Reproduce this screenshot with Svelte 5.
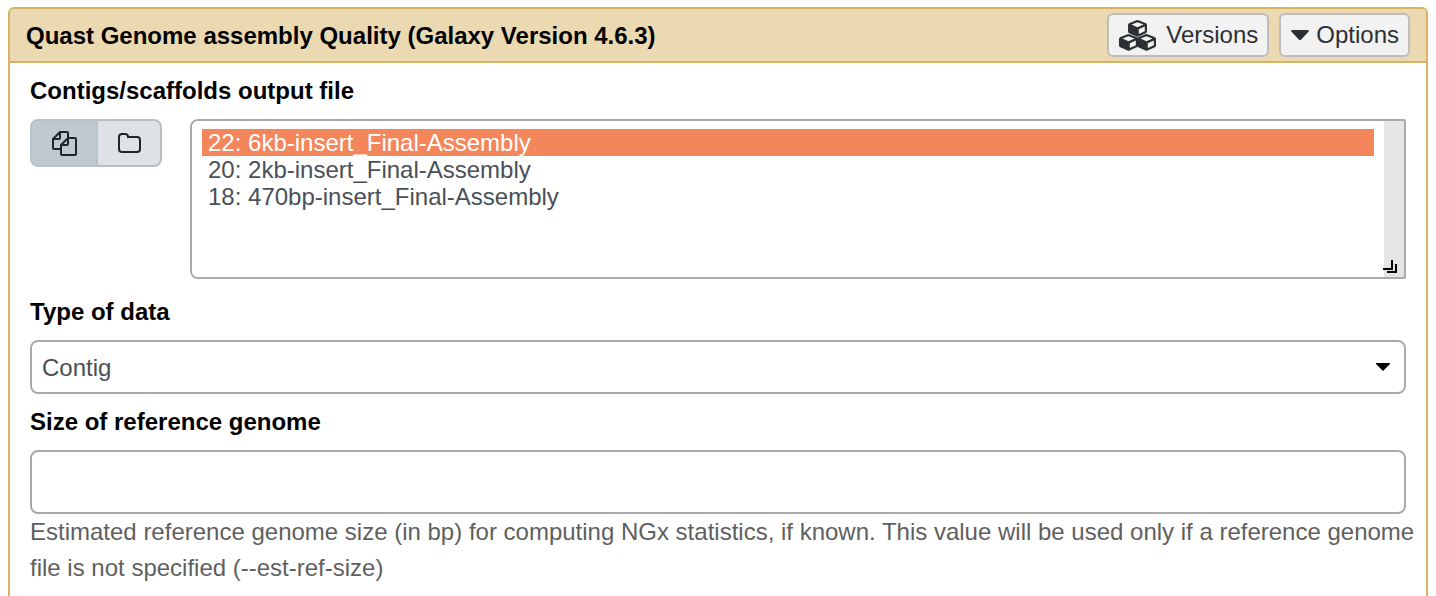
<script>
  const datasets = [
    { id: 22, name: '6kb-insert_Final-Assembly' },
    { id: 20, name: '2kb-insert_Final-Assembly' },
    { id: 18, name: '470bp-insert_Final-Assembly' }
  ];
  const cubes = [
    [9, 0],
    [0, 14],
    [18, 14]
  ];
  let selected = $state([22]);
  let dataType = $state('contig');
  let genomeSize = $state('');
  let source = $state('multiple');
</script>

<main class="tool">
  <header class="tool-header">
    <h1>Quast Genome assembly Quality (Galaxy Version 4.6.3)</h1>
    <div class="actions">
      <button type="button" class="action">
        <svg class="cubes" viewBox="0 0 37 31" aria-hidden="true">
          {#each cubes as [x, y]}
            <path transform="translate({x} {y})" fill-rule="evenodd" d="M8.500 .3Q9.500 -.1 10.500 .3L17.500 3Q19 3.600 19 5V11.500Q19 12.700 17.800 13.300L10.500 16.600Q9.500 17 8.500 16.600L1.200 13.300Q0 12.700 0 11.500V5Q0 3.600 1.500 3ZM9.500 2.200L3.500 4.600L9.500 7.200L15.500 4.600ZM10.800 9.200V14L16.800 11.300V6.500Z" />
          {/each}
        </svg>
        <span>Versions</span>
      </button>
      <button type="button" class="action options">
        <svg class="caret" viewBox="0 0 18 11" aria-hidden="true"><path d="M1 0H17Q18.500 .5 17.400 1.700L10 9.800Q9 10.600 8 9.800L.6 1.700Q-.5 .5 1 0Z" /></svg>
        <span>Options</span>
      </button>
    </div>
  </header>

  <form class="tool-body">
    <div class="field">
      <label for="contigs">Contigs/scaffolds output file</label>
      <div class="data-row">
        <div class="sources">
          <button type="button" class="source" class:active={source === 'multiple'} aria-label="Multiple datasets" onclick={() => (source = 'multiple')}>
            <svg class="files" viewBox="0 0 25 25" aria-hidden="true"><path d="M9 18H2Q1 18 1 17V8L8 1H15Q16 1 16 2V7M1 8H7Q8 8 8 7V1M9 14L16 7H23Q24 7 24 8V23Q24 24 23 24H10Q9 24 9 23ZM9 14H15Q16 14 16 13V7" /></svg>
          </button>
          <button type="button" class="source" class:active={source === 'collection'} aria-label="Dataset collection" onclick={() => (source = 'collection')}>
            <svg class="folder" viewBox="0 0 23 20" aria-hidden="true"><path d="M1 4Q1 1 4 1H7Q10 1 10 4H19Q22 4 22 7V16Q22 19 19 19H4Q1 19 1 16Z" /></svg>
          </button>
        </div>
        <div class="listbox">
          <select id="contigs" multiple size="5" bind:value={selected}>
            {#each datasets as d (d.id)}
              <option value={d.id}>{d.id}: {d.name}</option>
            {/each}
          </select>
          <div class="track">
            <svg class="grip" viewBox="0 0 14 14" aria-hidden="true"><path d="M0 9H9V0M4 12H13V4" /></svg>
          </div>
        </div>
      </div>
    </div>

    <div class="field">
      <label for="data-type">Type of data</label>
      <div class="dropdown">
        <select id="data-type" bind:value={dataType}>
          <option value="contig">Contig</option>
        </select>
        <svg class="arrow" viewBox="0 0 14 8" aria-hidden="true"><path d="M0 0H14V1L7 8L0 1Z" /></svg>
      </div>
    </div>

    <div class="field">
      <label for="genome-size">Size of reference genome</label>
      <input id="genome-size" type="text" bind:value={genomeSize} aria-describedby="genome-help" />
      <p id="genome-help">Estimated reference genome size (in bp) for computing NGx statistics, if known. This value will be used only if a reference genome file is not specified (--est-ref-size)</p>
    </div>
  </form>
</main>

<style>
  :global(body) {
    background: #fff;
    overflow: hidden;
  }

  .tool,
  .tool button,
  .tool select,
  .tool input {
    box-sizing: border-box;
    font-family: 'Liberation Sans', Arial, sans-serif;
    font-size: 24px;
  }

  .tool {
    margin: 7px 8px 0;
    min-height: 100vh;
    border: 2px solid #d8b365;
    border-radius: 6px;
    color: #000;
  }

  .tool-header {
    display: flex;
    align-items: center;
    justify-content: space-between;
    padding: 4px 16px;
    background: #ebd9b2;
    border-bottom: 2px solid #d8b365;
    border-radius: 4px 4px 0 0;
  }

  h1 {
    margin: 0;
    padding-top: 2px;
    font-size: 24px;
    line-height: 36px;
  }

  .actions {
    display: flex;
    gap: 10px;
  }

  .action {
    display: flex;
    align-items: center;
    gap: 10px;
    height: 44px;
    padding: 0 9px 0 10px;
    border: 2px solid #bdbdbd;
    border-radius: 6px;
    background: #f2f2f2;
    color: #2c3034;
  }

  .options {
    gap: 7px;
  }

  svg {
    display: block;
    flex: none;
    fill: currentColor;
  }

  .cubes {
    width: 37px;
    height: 31px;
  }

  .caret {
    width: 18px;
    height: 11px;
  }

  .tool-body {
    padding: 10px 20px;
  }

  .field {
    margin-bottom: 10px;
  }

  .field:first-child {
    margin-bottom: 15px;
  }

  label {
    display: block;
    margin-bottom: 10px;
    font-weight: bold;
    line-height: 36px;
  }

  .data-row {
    display: flex;
    align-items: flex-start;
    gap: 28px;
  }

  .sources {
    display: flex;
  }

  .source {
    display: flex;
    align-items: center;
    justify-content: center;
    width: 64px;
    height: 48px;
    padding: 0;
    border: 2px solid #bdbdbd;
    border-left: 0;
    border-radius: 0 8px 8px 0;
    background: #dee2e6;
    color: #212529;
  }

  .source:first-child {
    width: 68px;
    border: 2px solid #b9c3cc;
    border-radius: 8px 0 0 8px;
  }

  .source.active {
    background: #c1c9d0;
  }

  .source svg {
    fill: none;
    stroke: currentColor;
    stroke-width: 2;
  }

  .files {
    width: 25px;
    height: 25px;
  }

  .folder {
    width: 23px;
    height: 20px;
  }

  .listbox {
    display: flex;
    flex: 1;
    height: 160px;
    box-sizing: border-box;
    border: 2px solid #aaa;
    border-radius: 8px 2px 2px 8px;
  }

  .listbox select {
    flex: 1;
    min-width: 0;
    height: 100%;
    padding: 8px 10px;
    border: 0;
    border-radius: 6px;
    outline: 0;
    background: #fff;
    color: #495057;
    overflow: hidden;
  }

  .listbox option {
    height: 27px;
    min-height: 0;
    box-sizing: border-box;
    padding: 0 6px;
  }

  .listbox option:checked {
    background: linear-gradient(#f4865c, #f4865c);
    -webkit-text-fill-color: #fff;
  }

  .track {
    position: relative;
    width: 20px;
    background: #e5e5e5;
  }

  .grip {
    position: absolute;
    right: 7px;
    bottom: 3px;
    width: 14px;
    height: 14px;
    fill: none;
    stroke: #000;
    stroke-width: 2;
  }

  .dropdown {
    position: relative;
  }

  .dropdown select {
    display: block;
    width: 100%;
    height: 54px;
    padding: 0 40px 0 10px;
    appearance: none;
    border: 2px solid #aaa;
    border-radius: 8px;
    background: #fff;
    color: #495057;
  }

  .arrow {
    position: absolute;
    top: 23px;
    right: 16px;
    width: 14px;
    height: 8px;
    pointer-events: none;
  }

  input {
    display: block;
    width: 100%;
    height: 64px;
    padding: 0 10px;
    border: 2px solid #aaa;
    border-radius: 8px;
    background: #fff;
    color: #495057;
  }

  p {
    margin: 0 -16px 0 0;
    color: #5f5f5f;
    line-height: 36px;
  }
</style>
